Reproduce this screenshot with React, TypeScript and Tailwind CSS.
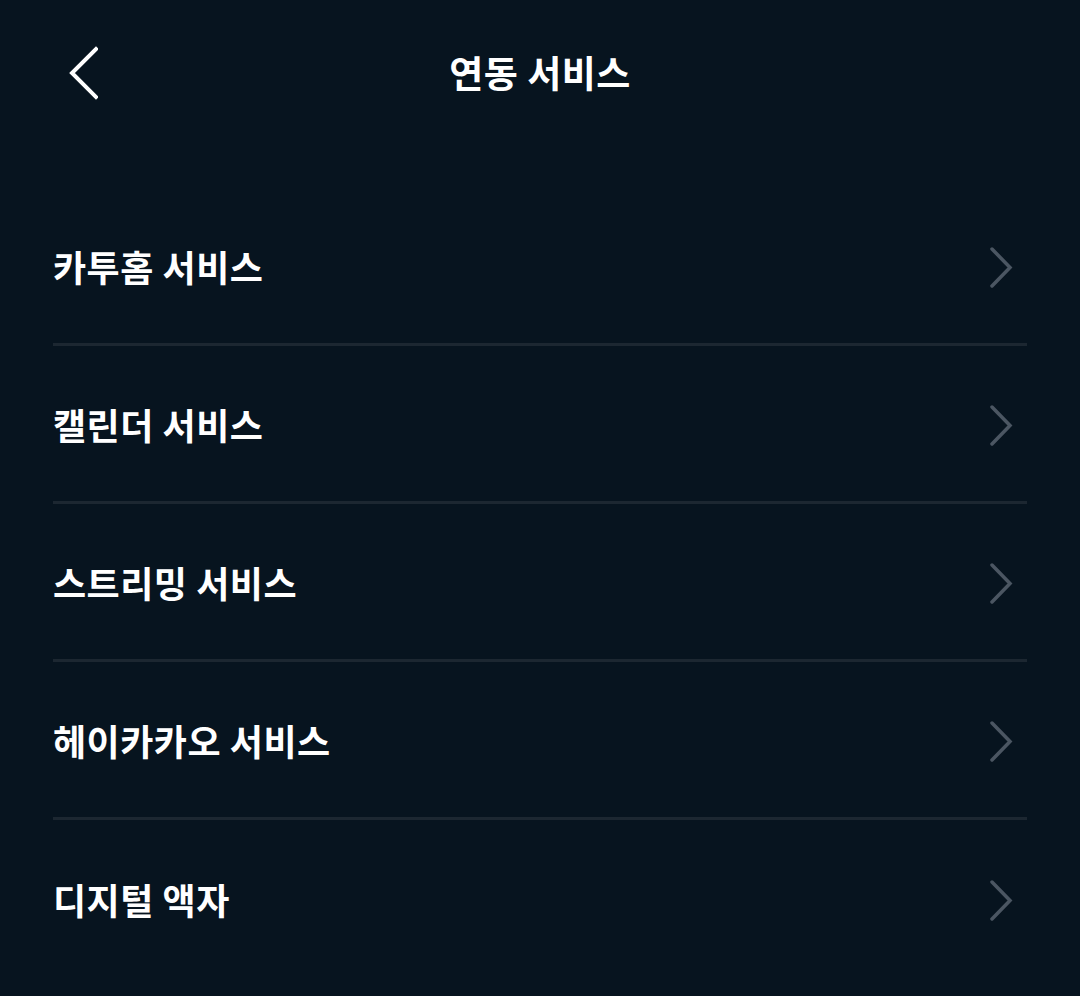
const services = ["카투홈 서비스", "캘린더 서비스", "스트리밍 서비스", "헤이카카오 서비스", "디지털 액자"]

function ChevronRight() {
  return (
    <svg width="26" height="44" viewBox="0 0 26 44" fill="none" aria-hidden="true">
      <polyline points="4,5 22,23.5 4,42" stroke="#4b5662" strokeWidth="3.5" strokeLinecap="round" strokeLinejoin="miter" />
    </svg>
  )
}

export default function App() {
  return (
    <div
      className="min-h-[996px] w-full bg-[#07141f] text-white"
      style={{ fontFamily: '"Noto Sans CJK KR", "Noto Sans", sans-serif' }}
    >
      <header className="relative flex h-[144px] items-center justify-center">
        <button className="absolute left-[64px] top-[46px] flex h-[54px] w-[36px] items-center justify-center" aria-label="뒤로">
          <svg width="32" height="54" viewBox="0 0 32 54" fill="none">
            <polyline points="30,3 6,27 30,51" stroke="#ffffff" strokeWidth="4" strokeLinecap="square" />
          </svg>
        </button>
        <h1 className="text-[37px] font-bold leading-none tracking-[0.5px]">연동 서비스</h1>
      </header>

      <ul className="mx-[53px] mt-[44px]">
        {services.map((name, i) => (
          <li
            key={name}
            className={`flex h-[158px] items-center justify-between pr-[13px] ${
              i < services.length - 1 ? "border-b-[3px] border-[#1c2731]" : ""
            }`}
          >
            <span className="text-[36px] font-bold leading-none tracking-[0.5px]">{name}</span>
            <ChevronRight />
          </li>
        ))}
      </ul>
    </div>
  )
}
